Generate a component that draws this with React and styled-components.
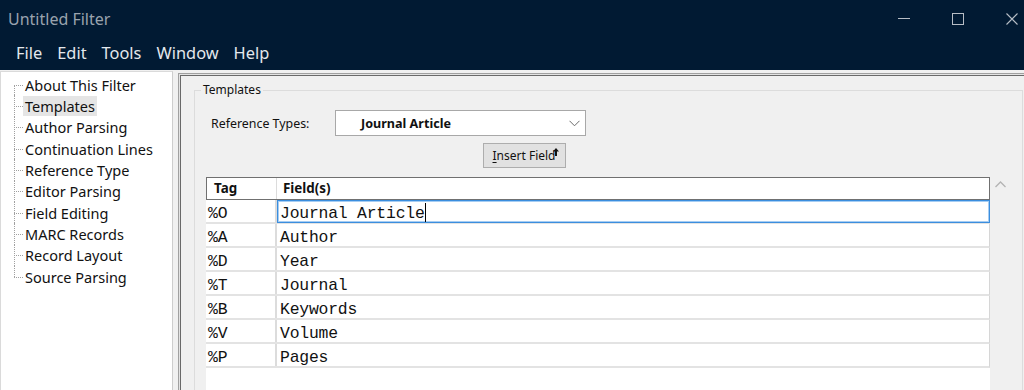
import React from "react";
import styled, { createGlobalStyle, css } from "styled-components";

const UI = "'Noto Sans', 'Open Sans', 'DejaVu Sans', sans-serif";
const MONO = "'Liberation Mono', 'DejaVu Sans Mono', monospace";

const Global = createGlobalStyle`
  html, body { margin: 0; padding: 0; background: #f0f0f0; }
  body { font-family: ${UI}; }
  * { box-sizing: border-box; }
`;

const Window = styled.div`
  width: 1024px;
  height: 390px;
  overflow: hidden;
  display: flex;
  flex-direction: column;
  background: #f0f0f0;
`;

const TitleBar = styled.div`
  height: 38px;
  background: #011a33;
  display: flex;
  align-items: center;
  padding-left: 8px;
`;

const Title = styled.div`
  flex: 1;
  color: #9aa3ae;
  font-size: 16px;
  line-height: 20px;
`;

const Controls = styled.div`
  display: flex;
  margin-right: -15px;
  height: 100%;
`;

const CtrlBtn = styled.div`
  width: 54px;
  height: 100%;
  display: flex;
  align-items: center;
  justify-content: center;
  color: #b7bdc5;
`;

const MenuBar = styled.div`
  height: 32px;
  background: #011a33;
  display: flex;
  align-items: center;
  padding-left: 16px;
  gap: 15px;
  padding-bottom: 2px;
`;

const MenuItem = styled.div`
  color: #e4e8ed;
  font-size: 16.4px;
  line-height: 22px;
`;

const Body = styled.div`
  flex: 1;
  display: flex;
  padding-top: 1px;
  background: #f0f0f0;
  min-height: 0;
`;

const Tree = styled.div`
  width: 173px;
  background: #fff;
  border-left: 1px solid #dadada;
  border-top: 1px solid #dadada;
  border-right: 1px solid #cdcdcd;
  padding-top: 2px;
`;

const TreeItem = styled.div`
  position: relative;
  height: 21.33px;
  display: flex;
  align-items: center;
  padding-left: 22px;

  &::before {
    content: "";
    position: absolute;
    left: 13px;
    width: 9px;
    top: 50%;
    border-top: 1px dotted #a0a0a0;
  }
  &::after {
    content: "";
    position: absolute;
    left: 13px;
    top: ${(p) => (p.$first ? "50%" : "0")};
    bottom: ${(p) => (p.$last ? "50%" : "0")};
    border-left: 1px dotted #a0a0a0;
  }
`;

const TreeLabel = styled.span`
  font-size: 14.5px;
  line-height: 20px;
  color: #111;
  padding: 0 2px;
  ${(p) =>
    p.$selected &&
    css`
      background: #e5e5e5;
    `}
`;

const Panel = styled.div`
  flex: 1;
  margin-left: 5px;
  margin-top: 2px;
  border-left: 1px solid #a0a0a0;
  border-top: 1px solid #a0a0a0;
  box-shadow: inset 1px 1px 0 #e3e3e3, inset 2px 2px 0 #696969;
  padding: 8px 1px 0 15px;
  overflow: hidden;
`;

const Group = styled.fieldset`
  margin: 0;
  border: 1px solid #dcdcdc;
  padding: 12px 11px 0 11px;
  height: 400px;
  min-width: 0;
`;

const Legend = styled.legend`
  font-size: 12px;
  line-height: 16px;
  color: #111;
  padding: 0 2px;
  margin-left: -5px;
`;

const FormRow = styled.div`
  display: flex;
  align-items: center;
  height: 26px;
  padding-left: 5px;
`;

const FieldLabel = styled.span`
  width: 124px;
  font-size: 12.4px;
  color: #111;
`;

const Select = styled.div`
  width: 251px;
  height: 26px;
  background: #fff;
  border: 1px solid #a8a8a8;
  display: flex;
  align-items: center;
  padding-left: 25px;
  padding-right: 5px;
  font-size: 12.6px;
  font-weight: 700;
  color: #111;
`;

const SelectText = styled.span`
  flex: 1;
`;

const ButtonRow = styled.div`
  display: flex;
  padding-left: 277px;
  margin-top: 7px;
`;

const Button = styled.div`
  width: 83px;
  height: 25px;
  background: #e1e1e1;
  border: 1px solid #adadad;
  display: flex;
  align-items: center;
  justify-content: center;
  font-size: 12px;
  color: #111;
  padding-left: 2px;

  u {
    text-decoration-thickness: 1px;
    text-underline-offset: 2px;
  }
`;

const GridWrap = styled.div`
  display: flex;
  margin-top: 9px;
`;

const Grid = styled.div`
  width: 784px;
  height: 230px;
  background: #fff;
`;

const HeaderRow = styled.div`
  display: grid;
  grid-template-columns: 70px 1fr;
  height: 23px;
  border: 1px solid #707070;
`;

const HeaderCell = styled.div`
  font-size: 13.4px;
  font-weight: 700;
  color: #111;
  line-height: 21px;
  padding-left: ${(p) => p.$pad}px;
  ${(p) =>
    p.$divider &&
    css`
      border-right: 1px solid #dcdcdc;
    `}
`;

const Row = styled.div`
  display: grid;
  grid-template-columns: 71px 1fr;
  height: 24px;
  border-bottom: 2px solid #e3e3e3;
  border-right: 1px solid #d6d6d6;
`;

const cellText = css`
  font-family: ${MONO};
  font-size: 16.4px;
  line-height: 22px;
  color: #111;
  padding-top: 3px;
  overflow: hidden;
  white-space: nowrap;
`;

const TagCell = styled.div`
  ${cellText};
  padding-left: 2px;
  border-right: 2px solid #dcdcdc;
`;

const FieldCell = styled.div`
  ${cellText};
  padding-left: 3px;
  letter-spacing: -0.2px;
  ${(p) =>
    p.$editing &&
    css`
      border: 1px solid #3b8ede;
      box-shadow: inset 0 0 0 1px #a6cdf3;
      margin-right: -1px;
      height: 23px;
      line-height: 20px;
      padding-top: 2px;
      padding-left: 2px;
    `}
`;

const Caret = styled.span`
  display: inline-block;
  width: 1px;
  height: 19px;
  background: #000;
  vertical-align: -4px;
`;

const ScrollCol = styled.div`
  width: 20px;
  display: flex;
  justify-content: center;
  padding-top: 4px;
`;

const tree = [
  "About This Filter",
  "Templates",
  "Author Parsing",
  "Continuation Lines",
  "Reference Type",
  "Editor Parsing",
  "Field Editing",
  "MARC Records",
  "Record Layout",
  "Source Parsing",
];

const rows = [
  ["%O", "Journal Article"],
  ["%A", "Author"],
  ["%D", "Year"],
  ["%T", "Journal"],
  ["%B", "Keywords"],
  ["%V", "Volume"],
  ["%P", "Pages"],
];

export default function App() {
  return (
    <>
      <Global />
      <Window>
        <TitleBar>
          <Title>Untitled Filter</Title>
          <Controls>
            <CtrlBtn>
              <svg width="12" height="12" viewBox="0 0 12 12">
                <line x1="0" y1="5.5" x2="12" y2="5.5" stroke="currentColor" strokeWidth="1" />
              </svg>
            </CtrlBtn>
            <CtrlBtn>
              <svg width="12" height="12" viewBox="0 0 12 12">
                <rect x="0.5" y="0.5" width="11" height="11" fill="none" stroke="currentColor" strokeWidth="1" />
              </svg>
            </CtrlBtn>
            <CtrlBtn>
              <svg width="12" height="12" viewBox="0 0 12 12">
                <path d="M0.5 0.5 L11.5 11.5 M11.5 0.5 L0.5 11.5" stroke="currentColor" strokeWidth="1.1" />
              </svg>
            </CtrlBtn>
          </Controls>
        </TitleBar>
        <MenuBar>
          {["File", "Edit", "Tools", "Window", "Help"].map((m) => (
            <MenuItem key={m}>{m}</MenuItem>
          ))}
        </MenuBar>
        <Body>
          <Tree>
            {tree.map((t, i) => (
              <TreeItem key={t} $first={i === 0} $last={i === tree.length - 1}>
                <TreeLabel $selected={t === "Templates"}>{t}</TreeLabel>
              </TreeItem>
            ))}
          </Tree>
          <Panel>
            <Group>
              <Legend>Templates</Legend>
              <FormRow>
                <FieldLabel>Reference Types:</FieldLabel>
                <Select>
                  <SelectText>Journal Article</SelectText>
                  <svg width="11" height="7" viewBox="0 0 11 7">
                    <path d="M0.5 0.8 L5.5 5.8 L10.5 0.8" fill="none" stroke="#6a6a6a" strokeWidth="1" />
                  </svg>
                </Select>
              </FormRow>
              <ButtonRow>
                <Button>
                  <span>
                    <u>I</u>nsert Field
                  </span>
                  <svg width="6" height="9" viewBox="0 0 6 9" style={{ marginLeft: -3, marginTop: -6 }}>
                    <path d="M3 0 L6 3.5 L4 3.5 L4 8 L2 8 L2 3.5 L0 3.5 Z" fill="#111" />
                  </svg>
                </Button>
              </ButtonRow>
              <GridWrap>
                <Grid>
                  <HeaderRow>
                    <HeaderCell $pad={7} $divider>Tag</HeaderCell>
                    <HeaderCell $pad={6}>Field(s)</HeaderCell>
                  </HeaderRow>
                  {rows.map(([tag, field], i) => (
                    <Row key={tag}>
                      <TagCell>{tag}</TagCell>
                      <FieldCell $editing={i === 0}>
                        {field}
                        {i === 0 && <Caret />}
                      </FieldCell>
                    </Row>
                  ))}
                </Grid>
                <ScrollCol>
                  <svg width="11" height="7" viewBox="0 0 11 7">
                    <path d="M0.5 6 L5.5 1 L10.5 6" fill="none" stroke="#b4b4b4" strokeWidth="1.3" />
                  </svg>
                </ScrollCol>
              </GridWrap>
            </Group>
          </Panel>
        </Body>
      </Window>
    </>
  );
}
